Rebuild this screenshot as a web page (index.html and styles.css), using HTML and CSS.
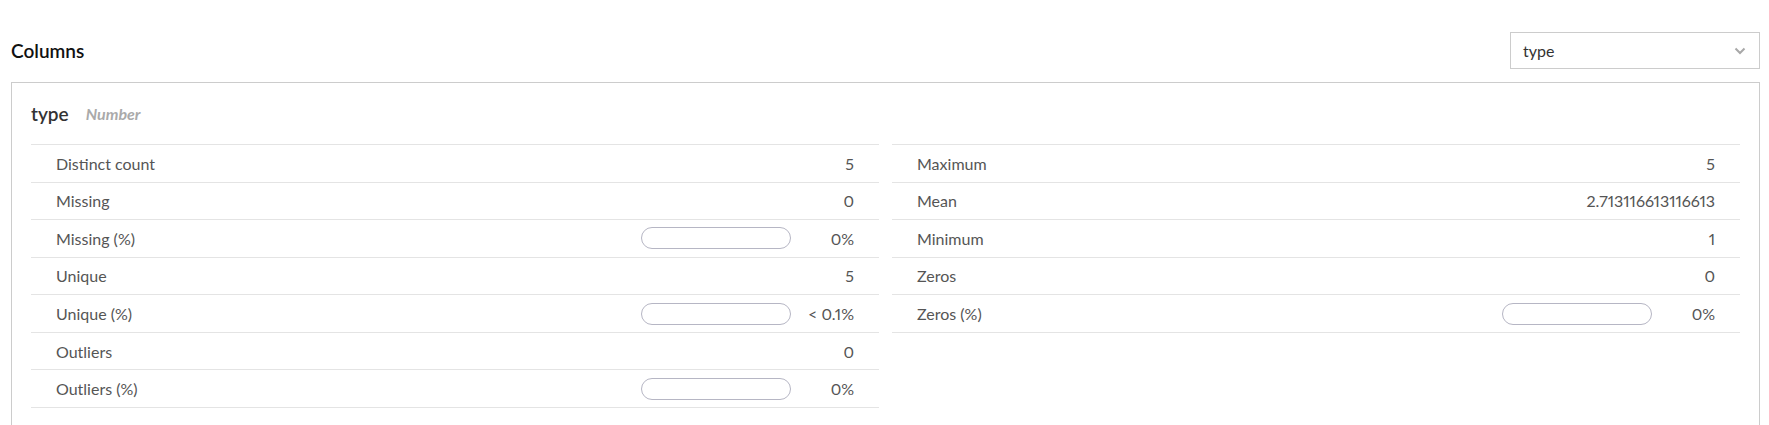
FILE: index.html
```html
<!DOCTYPE html>
<html>
<head>
<meta charset="utf-8">
<link rel="stylesheet" href="styles.css">
</head>
<body>
<div class="page">
  <div class="topbar">
    <h2 class="title">Columns</h2>
    <div class="select">
      <span class="select-text">type</span>
      <svg class="chevron" width="12" height="8" viewBox="0 0 12 8"><path d="M1.5 1.5 L6 6 L10.5 1.5" fill="none" stroke="#a8a8a8" stroke-width="2"/></svg>
    </div>
  </div>
  <div class="card">
    <div class="card-head">
      <span class="col-name">type</span>
      <span class="col-type">Number</span>
    </div>
    <div class="grid">
      <div class="table">
        <div class="row"><span class="label">Distinct count</span><span class="value">5</span></div>
        <div class="row"><span class="label">Missing</span><span class="value">0</span></div>
        <div class="row"><span class="label">Missing (%)</span><span class="bar"></span><span class="value">0%</span></div>
        <div class="row"><span class="label">Unique</span><span class="value">5</span></div>
        <div class="row"><span class="label">Unique (%)</span><span class="bar"></span><span class="value">&lt; 0.1%</span></div>
        <div class="row"><span class="label">Outliers</span><span class="value">0</span></div>
        <div class="row"><span class="label">Outliers (%)</span><span class="bar"></span><span class="value">0%</span></div>
      </div>
      <div class="table">
        <div class="row"><span class="label">Maximum</span><span class="value">5</span></div>
        <div class="row"><span class="label">Mean</span><span class="value">2.713116613116613</span></div>
        <div class="row"><span class="label">Minimum</span><span class="value">1</span></div>
        <div class="row"><span class="label">Zeros</span><span class="value">0</span></div>
        <div class="row"><span class="label">Zeros (%)</span><span class="bar"></span><span class="value">0%</span></div>
      </div>
    </div>
  </div>
</div>
</body>
</html>
```
FILE: styles.css
```css
* { box-sizing: border-box; }
html, body { margin: 0; padding: 0; background: #fff; }
body {
  font-family: "Source Sans Pro", Lato, "Noto Sans", sans-serif;
  color: #555;
  font-size: 16px;
  font-variant-numeric: proportional-nums;
}
.page {
  width: 1749px;
  margin-left: 11px;
  padding-top: 32px;
}
.topbar {
  display: flex;
  align-items: center;
  justify-content: space-between;
  height: 37px;
  margin-bottom: 13px;
}
.title {
  margin: 0;
  font-size: 19px;
  font-weight: 600;
  color: #111;
}
.select {
  width: 250px;
  height: 37px;
  border: 1px solid #ccc;
  display: flex;
  align-items: center;
  justify-content: space-between;
  padding: 0 13px 0 12px;
  font-size: 16px;
  color: #333;
}
.chevron { display: block; }
.card {
  border: 1px solid #ccc;
  padding: 0 19px 30px 19px;
}
.card-head {
  height: 61px;
  display: flex;
  align-items: center;
  gap: 17px;
}
.col-name {
  font-size: 19px;
  font-weight: 600;
  color: #333;
}
.col-type {
  font-size: 16px;
  font-style: italic;
  font-weight: 700;
  color: #aaa;
}
.grid {
  display: grid;
  grid-template-columns: 1fr 1fr;
  gap: 13px;
  align-items: start;
}
.table { border-top: 1px solid #e4e4e4; }
.row {
  display: flex;
  align-items: center;
  height: 37.57px;
  border-bottom: 1px solid #e4e4e4;
  padding: 0 25px;
}
.label { flex: 1; }
.bar {
  width: 150px;
  height: 22px;
  border: 1px solid #b6b6c4;
  border-radius: 11px;
}
.value {
  min-width: 63px;
  text-align: right;
}
```
